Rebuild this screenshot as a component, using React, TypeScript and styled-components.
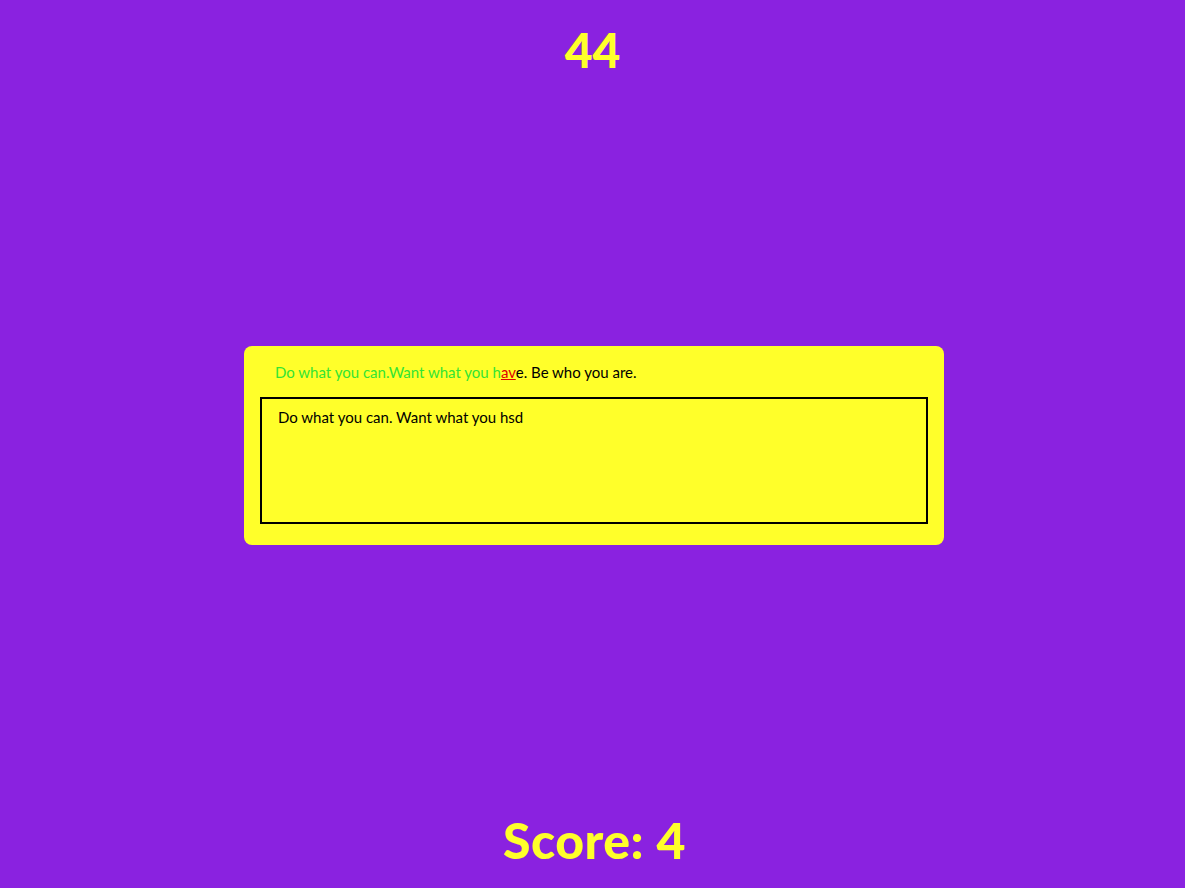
import React from "react";
import styled, { createGlobalStyle } from "styled-components";

const Global = createGlobalStyle`
  html, body { margin: 0; padding: 0; height: 100%; }
  body { background: #8a22e0; font-family: Lato, "Open Sans", sans-serif; }
  #root { height: 100%; }
`;

const Page = styled.div`
  height: 888px;
  display: flex;
  flex-direction: column;
  align-items: center;
  justify-content: space-between;
  box-sizing: border-box;
  padding: 22px 0 20px;
`;

const BigText = styled.div`
  color: #ffff2a;
  font-family: Lato, sans-serif;
  font-weight: 900;
  font-size: 48px;
  line-height: 56px;
`;

const ScoreText = styled(BigText)`
  font-size: 50px;
  letter-spacing: 0.5px;
  margin-left: 4px;
`;

const Card = styled.div`
  width: 700px;
  box-sizing: border-box;
  background: #ffff2a;
  border-radius: 8px;
  padding: 16px 16px 21px;
  margin-left: 3px;
`;

const Quote = styled.div`
  font-size: 15px;
  line-height: 20px;
  padding: 0 16px 0 15px;
  margin-bottom: 15px;
  color: #000;
`;

const Part = styled.span<{ $state: "done" | "wrong" | "todo" }>`
  color: ${(p) => (p.$state === "done" ? "#33e533" : p.$state === "wrong" ? "#e00000" : "#000")};
  text-decoration: ${(p) => (p.$state === "wrong" ? "underline" : "none")};
`;

const Input = styled.textarea`
  display: block;
  width: 100%;
  height: 127px;
  box-sizing: border-box;
  border: 2px solid #000;
  background: transparent;
  font-family: Lato, sans-serif;
  font-size: 15px;
  line-height: 20px;
  padding: 8px 16px;
  resize: none;
  outline: none;
  color: #000;
`;

export default function App() {
  return (
    <>
      <Global />
      <Page>
        <BigText>44</BigText>
        <Card>
          <Quote>
            <Part $state="done">Do what you can.Want what you h</Part>
            <Part $state="wrong">av</Part>
            <Part $state="todo">e. Be who you are.</Part>
          </Quote>
          <Input defaultValue="Do what you can. Want what you hsd" />
        </Card>
        <ScoreText>Score: 4</ScoreText>
      </Page>
    </>
  );
}
